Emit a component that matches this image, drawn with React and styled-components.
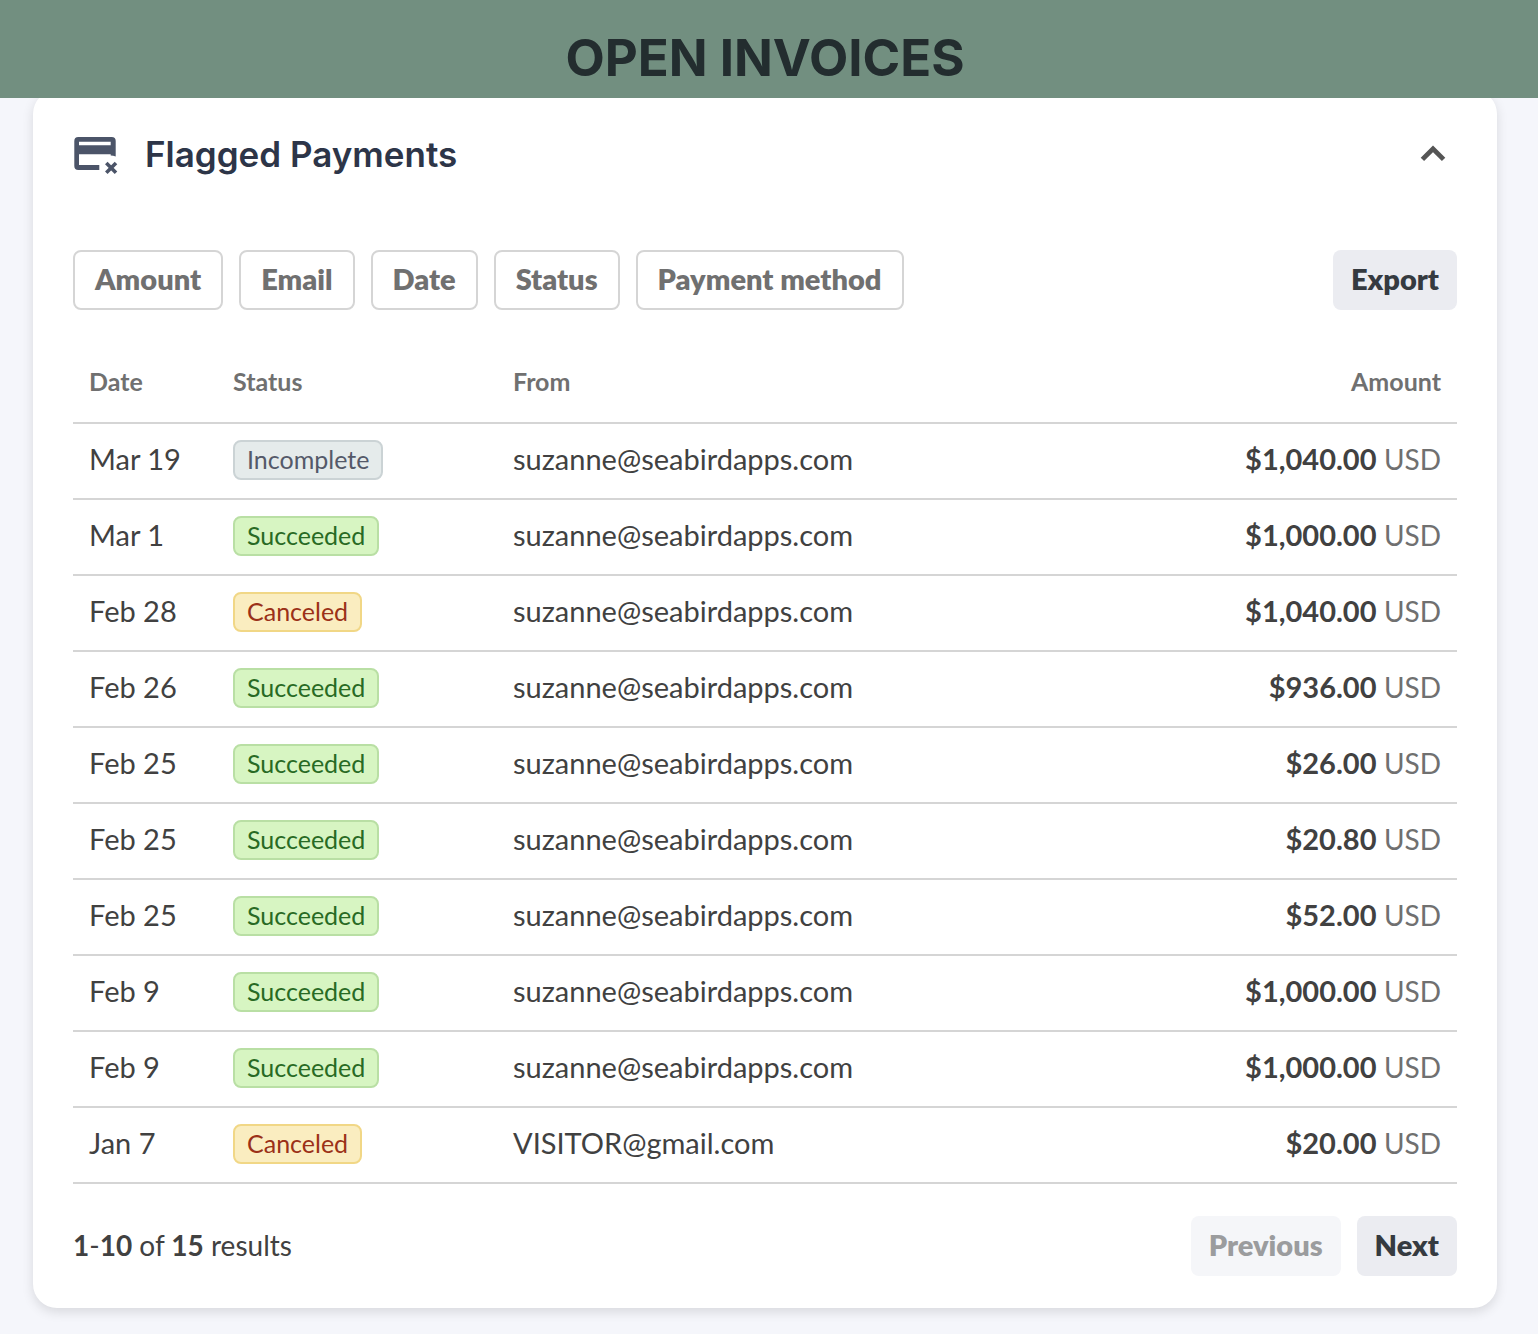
import React, { useState } from "react";
import styled, { createGlobalStyle } from "styled-components";

const GlobalStyle = createGlobalStyle`
  *, *::before, *::after {
    box-sizing: border-box;
  }
  body {
    margin: 0;
    background: #f5f6fb;
    color: #414141;
    font-family: Lato, "Open Sans", sans-serif;
    font-size: 28px;
    line-height: 40px;
  }
`;

const Banner = styled.header`
  position: relative;
  z-index: 1;
  display: flex;
  justify-content: center;
  padding: 26px 41px 8px 33px;
  background: #728f80;
`;
const BannerTitle = styled.h1`
  margin: 0;
  color: #232d2f;
  font-family: Inter, sans-serif;
  font-size: 51px;
  font-weight: 700;
  line-height: 64px;
`;
const Page = styled.main`
  padding: 0 41px 26px 33px;
`;
const Card = styled.section`
  margin-top: -8px;
  padding: 0 40px 32px;
  background: #ffffff;
  border-radius: 24px;
  box-shadow: 0 4px 12px rgba(0, 0, 0, 0.12);
`;
const CardHeader = styled.div`
  display: flex;
  align-items: center;
  gap: 24px;
  height: 128px;
`;
const CardTitle = styled.h2`
  flex: 1;
  margin: 0;
  color: #2d3548;
  font-family: Inter, sans-serif;
  font-size: 35px;
  font-weight: 600;
  line-height: 48px;
`;
const IconButton = styled.button`
  display: flex;
  padding: 12px;
  border: none;
  background: none;
  color: #555555;
  cursor: pointer;
`;
const Toolbar = styled.div`
  display: flex;
  align-items: center;
  gap: 16px;
  padding: 32px 0 30px;
`;
const FilterList = styled.div`
  display: flex;
  flex: 1;
  gap: 16px;
`;
const Button = styled.button`
  height: 60px;
  padding: 0 18px 2px;
  border: none;
  border-radius: 8px;
  background: #ebecf1;
  color: #353a40;
  font-family: inherit;
  font-size: 29px;
  font-weight: 800;
  line-height: 40px;
  cursor: pointer;
  &:disabled {
    background: #f5f6f9;
    color: #9b9c9e;
    cursor: default;
  }
`;
const FilterButton = styled(Button)`
  padding: 0 20px 2px;
  border: 2px solid #d5d5d5;
  background: #ffffff;
  color: #707070;
`;
const Table = styled.table`
  width: 100%;
  border-collapse: separate;
  border-spacing: 0;
  table-layout: fixed;
`;
const HeadCell = styled.th`
  width: ${({ $width }) => $width || "auto"};
  height: 84px;
  padding: 0 16px;
  border-bottom: 2px solid #d5d5d5;
  color: #707070;
  font-size: 25px;
  font-weight: 700;
  text-align: ${({ $align }) => $align || "left"};
`;
const Cell = styled.td`
  height: 76px;
  padding: 16px 16px 0;
  border-bottom: 2px solid #d5d5d5;
  font-size: 29px;
  line-height: 38px;
  text-align: ${({ $align }) => $align || "left"};
  vertical-align: top;
  white-space: nowrap;
`;

const badgeColors = {
  Incomplete: { bg: "#e5ebeb", border: "#cbd3d5", text: "#545969" },
  Succeeded: { bg: "#d7f5c2", border: "#b9dfa4", text: "#286a24" },
  Canceled: { bg: "#faedc0", border: "#f1d786", text: "#9b3118" },
};
const Badge = styled.span`
  display: block;
  width: fit-content;
  padding: 0 12px 2px;
  border: 2px solid ${({ $status }) => badgeColors[$status].border};
  border-radius: 8px;
  background: ${({ $status }) => badgeColors[$status].bg};
  color: ${({ $status }) => badgeColors[$status].text};
  font-size: 25px;
  line-height: 34px;
`;
const Currency = styled.span`
  color: #707070;
  font-size: 28px;
`;
const Footer = styled.footer`
  display: flex;
  align-items: center;
  gap: 16px;
  padding-top: 32px;
`;
const Results = styled.p`
  flex: 1;
  margin: 0;
  padding-bottom: 2px;
`;

const CardIcon = () => (
  <svg width="48" height="48" viewBox="0 0 48 48" aria-hidden="true">
    <path
      fill="#4b5468"
      fillRule="evenodd"
      d="M5.3 7h33.4a4 4 0 0 1 4 4v15.6a12 12 0 0 0-5-1.1v-1.2H6V35h20.3v5h-21a4 4 0 0 1-4-4V11a4 4 0 0 1 4-4ZM6 11.7v3.6h31.7v-3.6Z"
    />
    <path
      stroke="#4b5468"
      strokeWidth="3.6"
      d="m33.3 33 9.7 9.7m0-9.7-9.7 9.7"
    />
  </svg>
);

const ChevronUp = () => (
  <svg width="24" height="16" viewBox="0 0 24 16" overflow="visible" aria-hidden="true">
    <path fill="none" stroke="currentColor" strokeWidth="4.8" d="M1.4 13.4 12 2.8 22.6 13.4" />
  </svg>
);

const filters = ["Amount", "Email", "Date", "Status", "Payment method"];

const payments = [
  { date: "Mar 19", status: "Incomplete", from: "suzanne@seabirdapps.com", amount: "$1,040.00" },
  { date: "Mar 1", status: "Succeeded", from: "suzanne@seabirdapps.com", amount: "$1,000.00" },
  { date: "Feb 28", status: "Canceled", from: "suzanne@seabirdapps.com", amount: "$1,040.00" },
  { date: "Feb 26", status: "Succeeded", from: "suzanne@seabirdapps.com", amount: "$936.00" },
  { date: "Feb 25", status: "Succeeded", from: "suzanne@seabirdapps.com", amount: "$26.00" },
  { date: "Feb 25", status: "Succeeded", from: "suzanne@seabirdapps.com", amount: "$20.80" },
  { date: "Feb 25", status: "Succeeded", from: "suzanne@seabirdapps.com", amount: "$52.00" },
  { date: "Feb 9", status: "Succeeded", from: "suzanne@seabirdapps.com", amount: "$1,000.00" },
  { date: "Feb 9", status: "Succeeded", from: "suzanne@seabirdapps.com", amount: "$1,000.00" },
  { date: "Jan 7", status: "Canceled", from: "VISITOR@gmail.com", amount: "$20.00" },
];

const App = () => {
  const [open, setOpen] = useState(true);

  return (
    <>
      <GlobalStyle />
      <Banner>
        <BannerTitle>OPEN INVOICES</BannerTitle>
      </Banner>
      <Page>
        <Card>
          <CardHeader>
            <CardIcon />
            <CardTitle>Flagged Payments</CardTitle>
            <IconButton
              type="button"
              aria-label="Toggle flagged payments"
              aria-expanded={open}
              onClick={() => setOpen(!open)}
            >
              <ChevronUp />
            </IconButton>
          </CardHeader>
          {open && (
            <>
              <Toolbar>
                <FilterList>
                  {filters.map((filter) => (
                    <FilterButton type="button" key={filter}>
                      {filter}
                    </FilterButton>
                  ))}
                </FilterList>
                <Button type="button">Export</Button>
              </Toolbar>
              <Table>
                <thead>
                  <tr>
                    <HeadCell $width="144px">Date</HeadCell>
                    <HeadCell $width="280px">Status</HeadCell>
                    <HeadCell>From</HeadCell>
                    <HeadCell $align="right">Amount</HeadCell>
                  </tr>
                </thead>
                <tbody>
                  {payments.map((payment, index) => (
                    <tr key={index}>
                      <Cell>{payment.date}</Cell>
                      <Cell>
                        <Badge $status={payment.status}>{payment.status}</Badge>
                      </Cell>
                      <Cell>{payment.from}</Cell>
                      <Cell $align="right">
                        <strong>{payment.amount}</strong> <Currency>USD</Currency>
                      </Cell>
                    </tr>
                  ))}
                </tbody>
              </Table>
              <Footer>
                <Results>
                  <strong>1</strong>-<strong>10</strong> of <strong>15</strong> results
                </Results>
                <Button type="button" disabled>
                  Previous
                </Button>
                <Button type="button">Next</Button>
              </Footer>
            </>
          )}
        </Card>
      </Page>
    </>
  );
};
export default App;
